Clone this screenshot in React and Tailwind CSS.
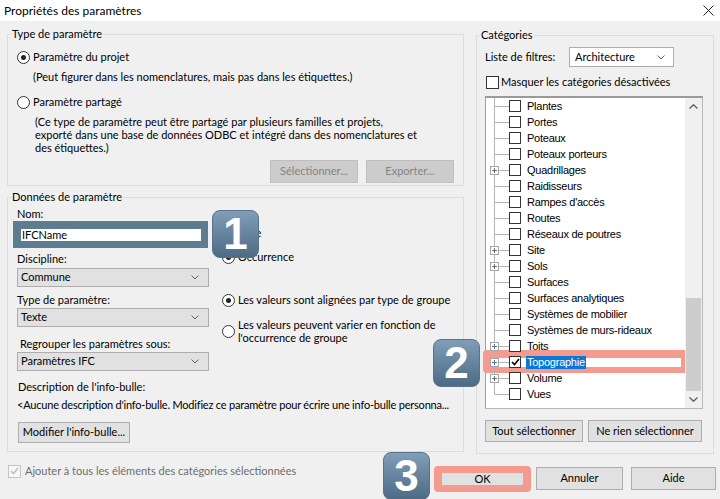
import React from 'react';

const Radio = ({ checked }) => (
  <span className="w-[13px] h-[13px] rounded-full border border-[#333] bg-white flex items-center justify-center shrink-0">
    {checked && <span className="w-[5px] h-[5px] rounded-full bg-[#222]" />}
  </span>
);

const Chevron = ({ color = '#606060' }) => (
  <svg width="8" height="5" viewBox="0 0 8 5" className="shrink-0">
    <path d="M0.5 0.5L4 4L7.5 0.5" fill="none" stroke={color} />
  </svg>
);

const Select = ({ value, className }) => (
  <div className={`h-[19px] flex items-center justify-between pl-[3px] pr-[9px] border border-[#adadad] ${className}`}>
    <span>{value}</span>
    <Chevron />
  </div>
);

const Btn = ({ children, className }) => (
  <div className={`flex items-center justify-center border ${className}`}>{children}</div>
);

const Check = ({ color = '#000' }) => (
  <svg width="9" height="8" viewBox="0 0 9 8">
    <path d="M1 4L3.5 6.5L8 1" fill="none" stroke={color} strokeWidth="1.6" />
  </svg>
);

const Badge = ({ n, className }) => (
  <div
    className={`absolute w-[47px] h-[48px] rounded-[8px] bg-linear-to-b from-[#819eb8] to-[#4e6b85] border border-[#56728c] flex items-center justify-center text-white font-bold text-[44px] leading-none font-['Liberation_Sans',Arial,sans-serif] ${className}`}
  >
    {n}
  </div>
);

const items = [
  ['Plantes', false],
  ['Portes', false],
  ['Poteaux', false],
  ['Poteaux porteurs', false],
  ['Quadrillages', true],
  ['Raidisseurs', false],
  ["Rampes d'accès", false],
  ['Routes', false],
  ['Réseaux de poutres', false],
  ['Site', true],
  ['Sols', true],
  ['Surfaces', false],
  ['Surfaces analytiques', false],
  ['Systèmes de mobilier', false],
  ['Systèmes de murs-rideaux', false],
  ['Toits', true],
  ['Topographie', true],
  ['Volume', true],
  ['Vues', false],
];

const TreeRow = ({ label, plus, last, selected }) => (
  <div className="h-[16px] flex items-center relative z-10">
    <svg width="23" height="16" className="shrink-0">
      {!selected && <line x1="8.5" y1="0" x2="8.5" y2={last ? 8.5 : 16} stroke="#b4b4b4" />}
      <line x1="8.5" y1="8.5" x2="23" y2="8.5" stroke="#b4b4b4" />
      {plus && (
        <g>
          <rect x="4.5" y="4.5" width="8" height="8" fill="#fff" stroke="#a6a6a6" />
          <line x1="6" y1="8.5" x2="11" y2="8.5" stroke="#5b6e8c" />
          <line x1="8.5" y1="6" x2="8.5" y2="11" stroke="#5b6e8c" />
        </g>
      )}
    </svg>
    <span className="w-[12px] h-[12px] border border-[#333] bg-white flex items-center justify-center shrink-0">
      {selected && <Check />}
    </span>
    <span className={`ml-[5px] px-[1px] leading-[13px] ${selected ? 'bg-[#0a78d7] text-white' : ''}`}>{label}</span>
  </div>
);

export default function App() {
  return (
    <div className="w-[720px] h-[499px] bg-[#f0f0f0] relative overflow-hidden text-[11px] text-black font-['Lato',sans-serif]">
      {/* title bar */}
      <div className="h-[21px] bg-white flex items-center justify-between pl-[4px] pr-[6px]">
        <span className="text-[12px]">Propriétés des paramètres</span>
        <svg width="11" height="11" viewBox="0 0 11 11">
          <path d="M0.5 0.5L10.5 10.5M10.5 0.5L0.5 10.5" stroke="#222" />
        </svg>
      </div>

      <div className="flex pl-[7px]">
        {/* left column */}
        <div className="w-[457px] shrink-0">
          <fieldset className="mt-[5px] min-w-0 border border-[#dcdcdc]">
            <legend className="ml-[3px] px-[1px] leading-[16px]">Type de paramètre</legend>
            <div className="px-[9px] pb-[2px]">
              <div className="mt-[7px] h-[16px] flex items-center gap-[3px]">
                <Radio checked />
                <span>Paramètre du projet</span>
              </div>
              <div className="mt-[4px] h-[16px] leading-[16px] ml-[16px]">
                (Peut figurer dans les nomenclatures, mais pas dans les étiquettes.)
              </div>
              <div className="mt-[9px] h-[16px] flex items-center gap-[3px]">
                <Radio />
                <span>Paramètre partagé</span>
              </div>
              <div className="mt-[5px] ml-[18px] leading-[13px]">
                (Ce type de paramètre peut être partagé par plusieurs familles et projets,
                <br />
                exporté dans une base de données ODBC et intégré dans des nomenclatures et
                <br />
                des étiquettes.)
              </div>
              <div className="mt-[6px] flex justify-end gap-[8px]">
                <Btn className="w-[88px] h-[23px] bg-[#cccccc] border-[#bfbfbf] text-[#838383]">Sélectionner...</Btn>
                <Btn className="w-[88px] h-[23px] bg-[#cccccc] border-[#bfbfbf] text-[#838383]">Exporter...</Btn>
              </div>
            </div>
          </fieldset>

          <fieldset className="mt-[3px] min-w-0 border border-[#dcdcdc]">
            <legend className="ml-[3px] px-[1px] leading-[16px]">Données de paramètre</legend>
            <div className="px-[9px] pb-[8px]">
              <div className="flex">
                <div className="w-[192px]">
                  <div className="mt-[1px] h-[16px] leading-[16px]">Nom:</div>
                  <div className="mt-[-1px] ml-[-4px] w-[195px] h-[27px] bg-[#5e7c90] pt-[8px] pl-[8px]">
                    <div className="w-[180px] h-[12px] bg-white leading-[12px] pl-[1px]">IFCName</div>
                  </div>
                  <div className="mt-[3px] h-[16px] leading-[16px]">Discipline:</div>
                  <Select value="Commune" className="mt-[1px] bg-[#e1e1e1]" />
                  <div className="mt-[5px] h-[16px] leading-[16px]">Type de paramètre:</div>
                  <Select value="Texte" className="bg-[#e1e1e1]" />
                  <div className="mt-[9px] h-[16px] leading-[16px] ml-[3px]">Regrouper les paramètres sous:</div>
                  <Select value="Paramètres IFC" className="bg-[#e1e1e1]" />
                </div>
                <div className="ml-[13px]">
                  <div className="mt-[20px] h-[16px] flex items-center gap-[3px]">
                    <Radio />
                    <span>Type</span>
                  </div>
                  <div className="mt-[8px] h-[16px] flex items-center gap-[3px]">
                    <Radio checked />
                    <span>Occurrence</span>
                  </div>
                  <div className="mt-[27px] h-[16px] flex items-center gap-[3px]">
                    <Radio checked />
                    <span>Les valeurs sont alignées par type de groupe</span>
                  </div>
                  <div className="mt-[10px] flex items-center gap-[3px]">
                    <Radio />
                    <span className="leading-[13px]">
                      Les valeurs peuvent varier en fonction de
                      <br />
                      l'occurrence de groupe
                    </span>
                  </div>
                </div>
              </div>
              <div className="mt-[8px] h-[16px] leading-[16px] ml-[1px]">Description de l'info-bulle:</div>
              <div className="mt-[2px] h-[16px] leading-[16px] whitespace-nowrap tracking-[-0.2px]">
                &lt;Aucune description d'info-bulle. Modifiez ce paramètre pour écrire une info-bulle personna...
              </div>
              <Btn className="mt-[9px] ml-[1px] w-[112px] h-[21px] bg-[#e1e1e1] border-[#adadad]">Modifier l'info-bulle...</Btn>
            </div>
          </fieldset>
        </div>

        {/* right column */}
        <div className="ml-[12px] w-[238px] shrink-0">
          <fieldset className="mt-[6px] min-w-0 border border-[#dcdcdc]">
            <legend className="ml-[3px] px-[1px] leading-[16px]">Catégories</legend>
            <div className="pl-[8px] pr-[10px] pb-[11px]">
              <div className="mt-[4px] flex items-center">
                <span className="w-[84px]">Liste de filtres:</span>
                <div className="w-[105px] h-[20px] bg-white border border-[#adadad] flex items-center justify-between pl-[5px] pr-[8px]">
                  <span>Architecture</span>
                  <Chevron />
                </div>
              </div>
              <div className="mt-[7px] h-[16px] flex items-center gap-[2px] ml-[1px]">
                <span className="w-[13px] h-[13px] border border-[#333] bg-white" />
                <span>Masquer les catégories désactivées</span>
              </div>
              <div className="mt-[6px] h-[313px] bg-white border border-[#b8b8b8] border-t-2 border-t-[#9a9a9a] border-l-[#a0a0a0] flex relative font-['Liberation_Sans',Arial,sans-serif] text-[11px] tracking-[-0.25px]">
                <div className="absolute left-[-3px] top-[252px] w-[206px] h-[23px] rounded-[4px] bg-[#f59a8f] pt-[8px] pl-[7px] z-0">
                  <div className="w-[191px] h-[9px] bg-white" />
                </div>
                <div className="flex-1">
                  {items.map(([label, plus], i) => (
                    <TreeRow
                      key={label}
                      label={label}
                      plus={plus}
                      last={i === items.length - 1}
                      selected={label === 'Topographie'}
                    />
                  ))}
                </div>
                <div className="w-[17px] bg-[#f0f0f0] flex flex-col relative z-10">
                  <div className="h-[17px] flex items-center justify-center">
                    <svg width="9" height="5" viewBox="0 0 9 5">
                      <path d="M0.5 4.5L4.5 0.8L8.5 4.5" fill="none" stroke="#606060" strokeWidth="1.4" />
                    </svg>
                  </div>
                  <div className="flex-1 flex flex-col justify-end px-[1px]">
                    <div className="h-[93px] bg-[#cdcdcd]" />
                  </div>
                  <div className="h-[17px] flex items-center justify-center">
                    <svg width="9" height="5" viewBox="0 0 9 5">
                      <path d="M0.5 0.5L4.5 4.2L8.5 0.5" fill="none" stroke="#606060" strokeWidth="1.4" />
                    </svg>
                  </div>
                </div>
              </div>
              <div className="mt-[11px] flex gap-[5px]">
                <Btn className="w-[98px] h-[22px] bg-[#e1e1e1] border-[#adadad]">Tout sélectionner</Btn>
                <Btn className="w-[114px] h-[22px] bg-[#e1e1e1] border-[#adadad]">Ne rien sélectionner</Btn>
              </div>
            </div>
          </fieldset>
        </div>
      </div>

      {/* bottom row */}
      <div className="flex items-start justify-between pr-[4px]">
        <div className="mt-[9px] ml-[8px] h-[16px] flex items-center gap-[4px] text-[#6d6d6d]">
          <span className="w-[13px] h-[13px] border border-[#c4c4c4] bg-[#f7f7f7] flex items-center justify-center">
            <Check color="#c0c0c0" />
          </span>
          <span>Ajouter à tous les éléments des catégories sélectionnées</span>
        </div>
        <div className="mt-[12px] flex items-start">
          <div className="w-[97px] h-[26px] rounded-[4px] bg-[#f59a8f] flex items-center justify-center">
            <div className="w-[81px] h-[12px] bg-[#e1e1e1] leading-[12px] text-center">OK</div>
          </div>
          <Btn className="ml-[5px] mt-[1px] w-[87px] h-[23px] bg-[#e1e1e1] border-[#adadad]">Annuler</Btn>
          <Btn className="ml-[8px] mt-[1px] w-[85px] h-[23px] bg-[#e1e1e1] border-[#adadad]">Aide</Btn>
        </div>
      </div>

      <Badge n="1" className="left-[212px] top-[210px]" />
      <Badge n="2" className="left-[433px] top-[339px]" />
      <Badge n="3" className="left-[383px] top-[452px]" />
    </div>
  );
}
